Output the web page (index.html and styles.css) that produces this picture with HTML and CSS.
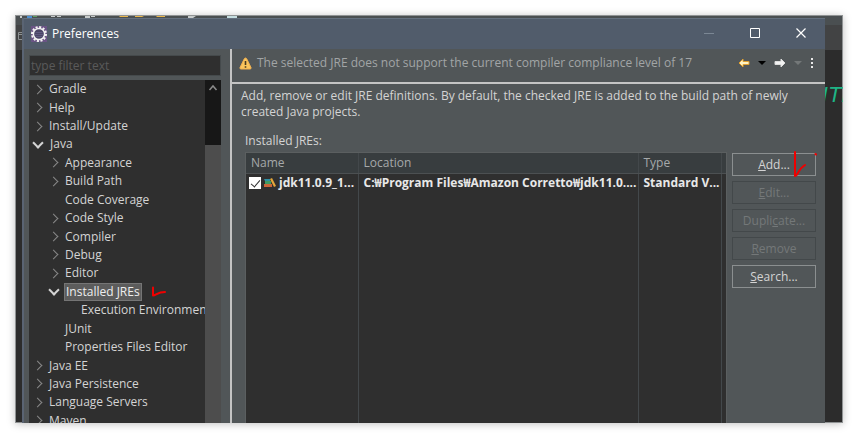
FILE: index.html
```html
<!DOCTYPE html>
<html lang="en">
<head>
    <meta charset="UTF-8">
    <meta name="viewport" content="width=device-width, initial-scale=1.0">
    <title>Preferences</title>
    <link rel="stylesheet" href="styles.css">
</head>
<body>

    <div class="desktop">
        <!-- IDE behind the dialog -->
        <div class="ide">
            <svg class="ide-tools" width="230" height="3" viewBox="0 0 230 3">
                <path fill="#4d8fd0" d="M12 1h5v2h-5z"/>
                <path fill="#5da060" d="M18 0h4v2h-4z"/>
                <path fill="#c8cccc" d="M5 1h2v2H5zM36 1h4v1h-4zM42 0h4v2h-4zM70 1h5v2h-5zM76 0h4v2h-4zM173 0h8v1l-3 2h-5z"/>
                <path fill="#e8b64c" d="M104 1l4-1v1h5v1h-8zM120 1h5V0l4 1-2 1h-7zM141 1l4-1v1h5v1h-8z"/>
                <path fill="#c5dde0" d="M212 0h10v3h-10z"/>
            </svg>
            <svg class="ide-view" width="7" height="9" viewBox="0 0 7 9">
                <path d="M7 .5H3.500v7H7M3 2.500h4" fill="none" stroke="#8d9192"/>
            </svg>
            <div class="ide-code">ITE</div>
        </div>

        <div class="window">
            <div class="titlebar">
                <svg width="16" height="16" viewBox="0 0 16 16">
                    <rect width="16" height="16" fill="#6a5485"/>
                    <circle cx="8" cy="8" r="7" fill="none" stroke="#f4f4f4" stroke-width="2" stroke-dasharray="2.100 1.560"/>
                    <circle cx="8" cy="8" r="5.600" fill="#4a4566" stroke="#f4f4f4" stroke-width="1.500"/>
                    <path d="M4.500 6.500h7M4 8.500h8M4.500 10.500h7" stroke="#5f5a80"/>
                </svg>
                <h1 class="title">Preferences</h1>
                <button class="window-button" aria-label="Minimize" disabled>
                    <svg width="12" height="12" viewBox="0 0 12 12"><path d="M1 6.500h10" stroke="#7b8794"/></svg>
                </button>
                <button class="window-button" aria-label="Maximize">
                    <svg width="12" height="12" viewBox="0 0 12 12"><path d="M1.500 1.500h9v9h-9z" fill="none" stroke="#fff"/></svg>
                </button>
                <button class="window-button" aria-label="Close">
                    <svg width="12" height="12" viewBox="0 0 12 12"><path d="M1.500 1.500l9 9M10.500 1.500l-9 9" stroke="#fff" stroke-width="1.200"/></svg>
                </button>
            </div>

            <div class="content">
                <nav class="sidebar">
                    <input class="filter" type="text" placeholder="type filter text" aria-label="type filter text">
                    <div class="tree">
                        <ul class="tree-list">
                            <li class="closed">Gradle</li>
                            <li class="closed">Help</li>
                            <li class="closed">Install/Update</li>
                            <li class="open">Java</li>
                            <li class="closed level-2">Appearance</li>
                            <li class="closed level-2">Build Path</li>
                            <li class="level-2">Code Coverage</li>
                            <li class="closed level-2">Code Style</li>
                            <li class="closed level-2">Compiler</li>
                            <li class="closed level-2">Debug</li>
                            <li class="closed level-2">Editor</li>
                            <li class="open level-2">
                                <span class="selected">Installed JREs</span>
                                <svg class="tick" width="16" height="12" viewBox="0 0 16 12">
                                    <path d="M2 1.500v8c3-.5 5-3.500 12-3.500" fill="none" stroke="#f00000" stroke-width="2" stroke-linecap="round" stroke-linejoin="round"/>
                                </svg>
                            </li>
                            <li class="level-3">Execution Environments</li>
                            <li class="level-2">JUnit</li>
                            <li class="level-2">Properties Files Editor</li>
                            <li class="closed">Java EE</li>
                            <li class="closed">Java Persistence</li>
                            <li class="closed">Language Servers</li>
                            <li class="closed">Maven</li>
                        </ul>
                        <div class="scrollbar">
                            <div class="scroll-track">
                                <svg width="10" height="8" viewBox="0 0 10 8"><path d="M1.500 6L5 2l3.500 4" fill="none" stroke="#8a8a8a" stroke-width="1.500"/></svg>
                            </div>
                            <div class="scroll-thumb"></div>
                        </div>
                    </div>
                </nav>

                <main class="page">
                    <div class="message">
                        <svg width="13" height="13" viewBox="0 0 13 13">
                            <path d="M6.500 1Q7.300 1 7.800 2l4.200 8.500q.5 1.500-1 1.500H2q-1.500 0-1-1.500L5.200 2q.5-1 1.300-1z" fill="#fbc55c" stroke="#f0b050"/>
                            <path d="M6.500 4v4M6.500 9.200v1.600" stroke="#4b3a1c" stroke-width="1.600"/>
                        </svg>
                        <p class="message-text">The selected JRE does not support the current compiler compliance level of 17</p>
                        <div class="nav-buttons">
                            <button class="icon-button" aria-label="Back">
                                <svg width="12" height="10" viewBox="0 0 12 10"><path d="M1 5l4-4v2.500h6v3H5V9z" fill="#fff3c4" stroke="#e0a030" stroke-linejoin="round"/></svg>
                            </button>
                            <button class="icon-button" aria-label="Back history">
                                <svg width="8" height="4" viewBox="0 0 8 4"><path d="M0 0h8L4 4z" fill="#000"/></svg>
                            </button>
                            <button class="icon-button" aria-label="Forward">
                                <svg width="12" height="10" viewBox="0 0 12 10"><path d="M11 5L7 1v2.500H1v3h6V9z" fill="#f2f2f2" stroke="#dcdcdc" stroke-linejoin="round"/></svg>
                            </button>
                            <button class="icon-button" aria-label="Forward history" disabled>
                                <svg width="8" height="4" viewBox="0 0 8 4"><path d="M0 0h8L4 4z" fill="#747879"/></svg>
                            </button>
                            <button class="icon-button" aria-label="Menu">
                                <svg width="4" height="12" viewBox="0 0 4 12"><path d="M1 1h2v2H1zM1 5h2v2H1zM1 9h2v2H1z" fill="#e8e8e8"/></svg>
                            </button>
                        </div>
                    </div>

                    <div class="body">
                        <p class="description">Add, remove or edit JRE definitions. By default, the checked JRE is added to the build path of newly created Java projects.</p>
                        <h2 class="label" id="jres">Installed <u>J</u>REs:</h2>
                        <div class="jres">
                            <div class="table-box">
                                <table class="table" aria-labelledby="jres">
                                    <colgroup>
                                        <col class="col-name">
                                        <col class="col-location">
                                        <col class="col-type">
                                        <col class="col-rest">
                                    </colgroup>
                                    <thead>
                                        <tr><th>Name</th><th>Location</th><th>Type</th><th></th></tr>
                                    </thead>
                                    <tbody>
                                        <tr>
                                            <td>
                                                <label class="name">
                                                    <input class="check" type="checkbox" checked>
                                                    <svg width="12" height="10" viewBox="0 0 12 10">
                                                        <path fill="#2f8fa3" d="M0 1h6v2H1z"/>
                                                        <path fill="#3f9b62" d="M1 3h6v3H1z"/>
                                                        <path fill="#c9653a" d="M0 6h8v3H0z"/>
                                                        <path fill="#e3a63a" d="M6 1l2-1 4 8-2 1z"/>
                                                    </svg>
                                                    jdk11.0.9_1...
                                                </label>
                                            </td>
                                            <td>C:₩Program Files₩Amazon Corretto₩jdk11.0....</td>
                                            <td>Standard V...</td>
                                            <td></td>
                                        </tr>
                                        <tr class="filler"><td></td><td></td><td></td><td></td></tr>
                                    </tbody>
                                </table>
                            </div>
                            <div class="actions">
                                <button class="button"><u>A</u>dd...
                                    <svg class="mark" width="24" height="28" viewBox="0 0 24 28">
                                        <path d="M2 1v24c3 0 3-7 10-11M22.500 3l.5.500" fill="none" stroke="#f00000" stroke-width="2" stroke-linecap="round" stroke-linejoin="round"/>
                                    </svg>
                                </button>
                                <button class="button" disabled><u>E</u>dit...</button>
                                <button class="button" disabled>Dupli<u>c</u>ate...</button>
                                <button class="button" disabled><u>R</u>emove</button>
                                <button class="button"><u>S</u>earch...</button>
                            </div>
                        </div>
                    </div>
                </main>
            </div>
        </div>
    </div>

</body>
</html>
```

FILE: styles.css
```css
* {
    box-sizing: border-box;
}
body {
    margin: 0;
    height: 100vh;
    padding: 15px;
    background-color: #fff;
    font-family: "Open Sans", "Noto Sans CJK KR", sans-serif;
    font-size: 12px;
    line-height: 16px;
    color: #d4d4d4;
}
h1, h2, p, ul {
    margin: 0;
    padding: 0;
    font-size: 12px;
    font-weight: normal;
}
button, input {
    font: inherit;
    color: inherit;
}
svg {
    display: block;
    flex: none;
}
.desktop {
    position: relative;
    height: 100%;
    overflow: hidden;
    outline: 1px solid #909394;
    outline-offset: -1px;
    box-shadow: 0 1px 8px rgba(0, 0, 0, 0.25);
}
.ide {
    height: 100%;
    background: linear-gradient(#4a4f51 0 10px, #424344 10px 35px, #2c2c2c 35px);
}
.ide-view {
    position: absolute;
    top: 17px;
    left: 0;
}
.ide-code {
    position: absolute;
    top: 66px;
    right: -13px;
    font-family: "Liberation Sans", sans-serif;
    font-size: 22px;
    line-height: 28px;
    font-style: italic;
    color: #1eb586;
}

/* dialog */
.window {
    position: absolute;
    top: 3px;
    right: 18px;
    bottom: 0;
    left: 7px;
    display: flex;
    flex-direction: column;
    background-color: #515658;
    border-left: 2px solid #5a6473;
}
.titlebar {
    display: flex;
    align-items: center;
    height: 31px;
    padding-right: 1px;
    padding-left: 7px;
    background-color: #515c6b;
    border-top: 1px solid #64707f;
    color: #fff;
}
.title {
    flex: 1;
    padding-left: 5px;
}
.window-button {
    display: flex;
    align-items: center;
    justify-content: center;
    width: 46px;
    height: 30px;
    padding: 0 0 2px;
    border: none;
    background: none;
}
.content {
    flex: 1;
    display: flex;
    min-height: 0;
}

/* tree */
.sidebar {
    display: flex;
    flex-direction: column;
    gap: 4px;
    width: 206px;
    padding: 6px 9px 0 5px;
}
.filter {
    height: 21px;
    width: 100%;
    padding: 0 1px;
    border: 1px solid #454a4c;
    background-color: #2f2f2f;
}
.filter::placeholder {
    color: #5a5a5a;
    opacity: 1;
}
.tree {
    flex: 1;
    display: flex;
    min-height: 0;
    background-color: #2f2f2f;
    overflow: hidden;
}
.tree-list {
    flex: 1;
    display: grid;
    grid-auto-rows: 1fr;
    min-width: 0;
    margin-bottom: -7px;
    overflow: hidden;
    list-style: none;
}
.tree-list li {
    display: flex;
    align-items: center;
    min-height: 0;
    padding-left: 20px;
    white-space: nowrap;
}
.tree-list .level-2 {
    padding-left: 36px;
}
.tree-list .level-3 {
    padding-left: 52px;
}
.closed::before,
.open::before {
    content: "";
    flex: none;
    width: 6px;
    height: 6px;
    margin-left: -15px;
    margin-right: 8px;
    border: solid #888;
    border-width: 1px 1px 0 0;
    transform: rotate(45deg);
}
.open::before {
    border-color: #d4d4d4;
    border-width: 0 2px 2px 0;
    margin-bottom: 3px;
}
.selected {
    margin-left: -2px;
    padding: 0 1px;
    border: 1px solid #757575;
    background-color: #5c5c5c;
    color: #eee;
}
.tick {
    margin-left: 9px;
}
.scrollbar {
    width: 16px;
    display: flex;
    flex-direction: column;
}
.scroll-track {
    height: 65px;
    padding: 4px 3px;
    background-color: #171717;
}
.scroll-thumb {
    flex: 1;
    background-color: #4d4d4d;
}

/* preference page */
.page {
    flex: 1;
    display: flex;
    flex-direction: column;
    min-width: 0;
    border-left: 2px solid #c4c4c4;
}
.message {
    display: flex;
    align-items: center;
    height: 35px;
    padding: 0 11px 5px 7px;
    border-bottom: 2px solid #c4c4c4;
}
.message-text {
    flex: 1;
    padding-left: 5px;
    color: #a2a5a6;
    white-space: nowrap;
}
.nav-buttons {
    display: flex;
    align-items: center;
    gap: 8px;
}
.icon-button {
    padding: 0;
    border: none;
    background: none;
}
.body {
    flex: 1;
    display: flex;
    flex-direction: column;
    min-height: 0;
    padding: 4px 9px 0;
}
.label {
    padding: 13px 0 3px 4px;
}
.jres {
    flex: 1;
    display: flex;
    gap: 5px;
    min-height: 0;
    padding-left: 4px;
}
.table-box {
    flex: 1;
    min-width: 0;
    border: 1px solid #5b5f60;
    border-bottom: none;
    background-color: #2f2f2f;
}
.table {
    width: 100%;
    height: 100%;
    table-layout: fixed;
    border-collapse: collapse;
}
.col-name {
    width: 112px;
}
.col-type {
    width: 83px;
}
.col-rest {
    width: 5px;
}
.table th,
.table td {
    height: 20px;
    padding: 0 0 0 5px;
    border-right: 1px solid #43484b;
    text-align: left;
    white-space: nowrap;
    overflow: hidden;
}
.table th {
    padding-top: 1px;
    font-weight: normal;
    color: #a6a9aa;
    background-color: #383d3f;
    border-bottom: 1px solid #4c5052;
}
.table td {
    font-weight: bold;
    color: #e8e8e8;
}
.table th:last-child,
.table td:last-child {
    padding: 0;
    border-right: none;
}
.table .filler td {
    height: auto;
}
.name {
    display: flex;
    align-items: center;
    gap: 3px;
    margin-left: -2px;
}
.check {
    flex: none;
    appearance: none;
    width: 12px;
    height: 12px;
    margin: 0;
    background-color: #fff;
}
.check:checked::before {
    content: "";
    display: block;
    width: 4px;
    height: 8px;
    margin: 1px 4px;
    border: solid #333;
    border-width: 0 1px 1px 0;
    transform: rotate(40deg);
}
.actions {
    display: flex;
    flex-direction: column;
    gap: 5px;
    padding-top: 1px;
}
.button {
    position: relative;
    width: 84px;
    height: 23px;
    padding: 0;
    border: 1px solid #8b8f90;
    background-color: #515658;
    color: #d4d4d4;
}
.button:disabled {
    border-color: #43484a;
    color: #747879;
}
.mark {
    position: absolute;
    top: -3px;
    right: -2px;
}
```
